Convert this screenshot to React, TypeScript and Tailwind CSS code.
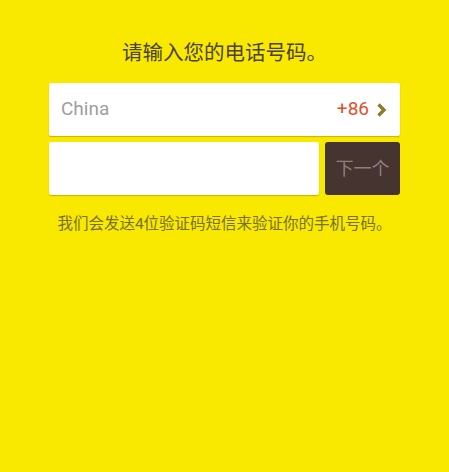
import React from "react";

export default function App() {
  return (
    <div
      className="w-[449px] h-[472px] bg-[#f9e800] flex flex-col items-center"
      style={{ fontFamily: "Roboto, 'Noto Sans CJK SC', sans-serif" }}
    >
      <div className="mt-[41px] h-[24px] leading-[24px] text-[20.5px] text-[#4a4234]">
        请输入您的电话号码。
      </div>
      <div className="mt-[18px] w-[351px] flex flex-col gap-[6px]">
        <div className="h-[53px] bg-white rounded-[2px] shadow-[0_1px_1px_rgba(150,130,0,0.5)] flex items-center pl-[12px] pr-[13px]">
          <span className="text-[19px] text-[#9e9e9e] flex-1">China</span>
          <span className="text-[19px] text-[#e2502a]">+86</span>
          <svg width="11" height="16" viewBox="0 0 11 16" className="ml-[7px]">
            <path d="M2.5 2.5 L8 8 L2.5 13.5" fill="none" stroke="#8b7d2c" strokeWidth="3.4" />
          </svg>
        </div>
        <div className="flex gap-[6px] h-[53px]">
          <div className="flex-1 bg-white rounded-[2px] shadow-[0_1px_1px_rgba(150,130,0,0.5)]" />
          <div className="w-[75px] bg-[#463431] rounded-[3px] flex items-center justify-center text-[18px] text-[#8d807d]">
            下一个
          </div>
        </div>
      </div>
      <div className="mt-[19px] text-[15.5px] leading-[21px] text-[#77702a]">
        我们会发送4位验证码短信来验证你的手机号码。
      </div>
    </div>
  );
}
